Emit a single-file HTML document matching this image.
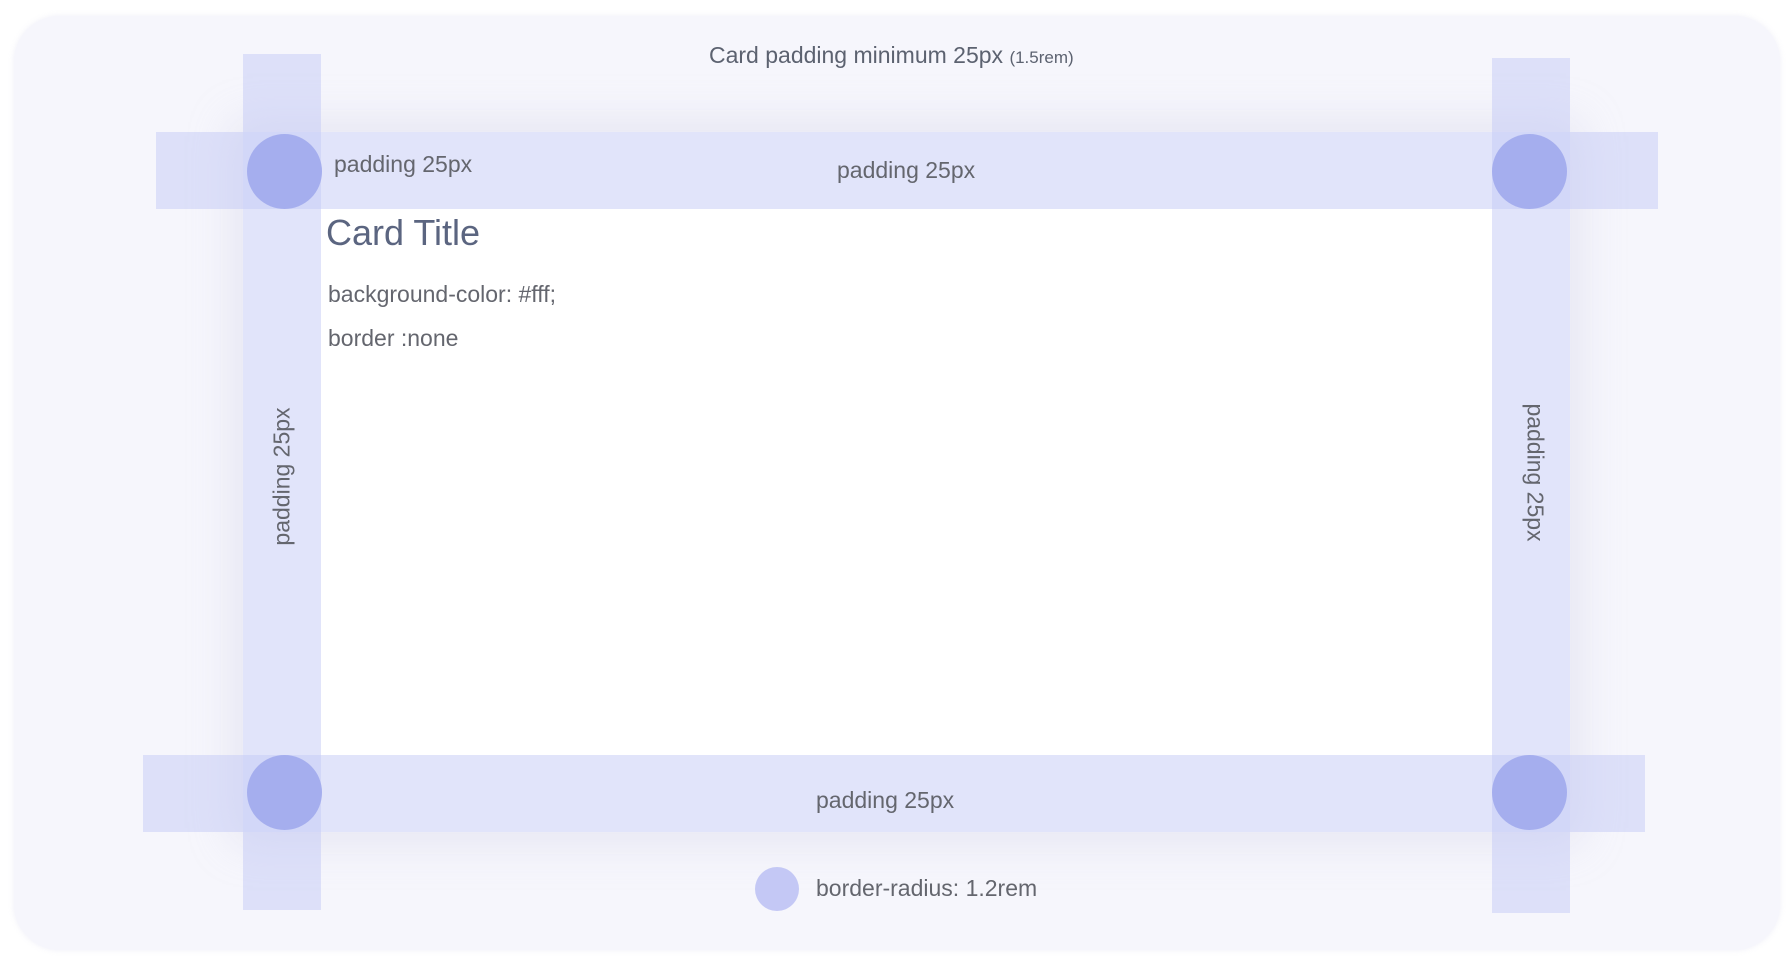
<!DOCTYPE html>
<html><head><meta charset="utf-8"><style>
html,body{margin:0;padding:0;background:#fff;width:1792px;height:972px;overflow:hidden;font-family:"Liberation Sans",sans-serif;}
.abs{position:absolute;}
.panel{left:14px;top:16px;width:1766px;height:934px;border-radius:46px;background:#f6f6fc;box-shadow:0 0 6px rgba(200,200,230,0.3);}
.card{left:243px;top:132px;width:1327px;height:700px;background:#fff;box-shadow:0 0 40px 10px rgba(200,200,225,0.35);}
.bar{background:rgba(196,202,246,0.5);}
.dot{width:75px;height:75px;border-radius:50%;background:#a5aeee;}
.t{color:#64666e;font-size:23px;white-space:nowrap;line-height:1;}
</style></head><body>
<div class="abs panel"></div>
<div class="abs card"></div>
<div class="abs bar" style="left:243px;top:54px;width:78px;height:856px"></div>
<div class="abs bar" style="left:1492px;top:58px;width:78px;height:855px"></div>
<div class="abs bar" style="left:156px;top:132px;width:1502px;height:77px"></div>
<div class="abs bar" style="left:143px;top:755px;width:1502px;height:77px"></div>
<div class="abs dot" style="left:247px;top:134px"></div>
<div class="abs dot" style="left:1492px;top:134px"></div>
<div class="abs dot" style="left:247px;top:755px"></div>
<div class="abs dot" style="left:1492px;top:755px"></div>
<div class="abs" style="left:755px;top:867px;width:44px;height:44px;border-radius:50%;background:#c4c8f5"></div>

<div class="abs t" style="left:709px;top:44px;color:#5c6270">Card padding minimum 25px <span style="font-size:17px">(1.5rem)</span></div>
<div class="abs t" style="left:334px;top:153px">padding 25px</div>
<div class="abs t" style="left:837px;top:159px">padding 25px</div>
<div class="abs t" style="left:326px;top:215px;font-size:36px;color:#5b6580">Card Title</div>
<div class="abs t" style="left:328px;top:283px">background-color: #fff;</div>
<div class="abs t" style="left:328px;top:327px">border :none</div>
<div class="abs t" style="left:212px;top:465px;width:140px;text-align:center;transform:rotate(-90deg)">padding 25px</div>
<div class="abs t" style="left:1465px;top:461px;width:140px;text-align:center;transform:rotate(90deg)">padding 25px</div>
<div class="abs t" style="left:816px;top:789px">padding 25px</div>
<div class="abs t" style="left:816px;top:877px">border-radius: 1.2rem</div>
</body></html>
